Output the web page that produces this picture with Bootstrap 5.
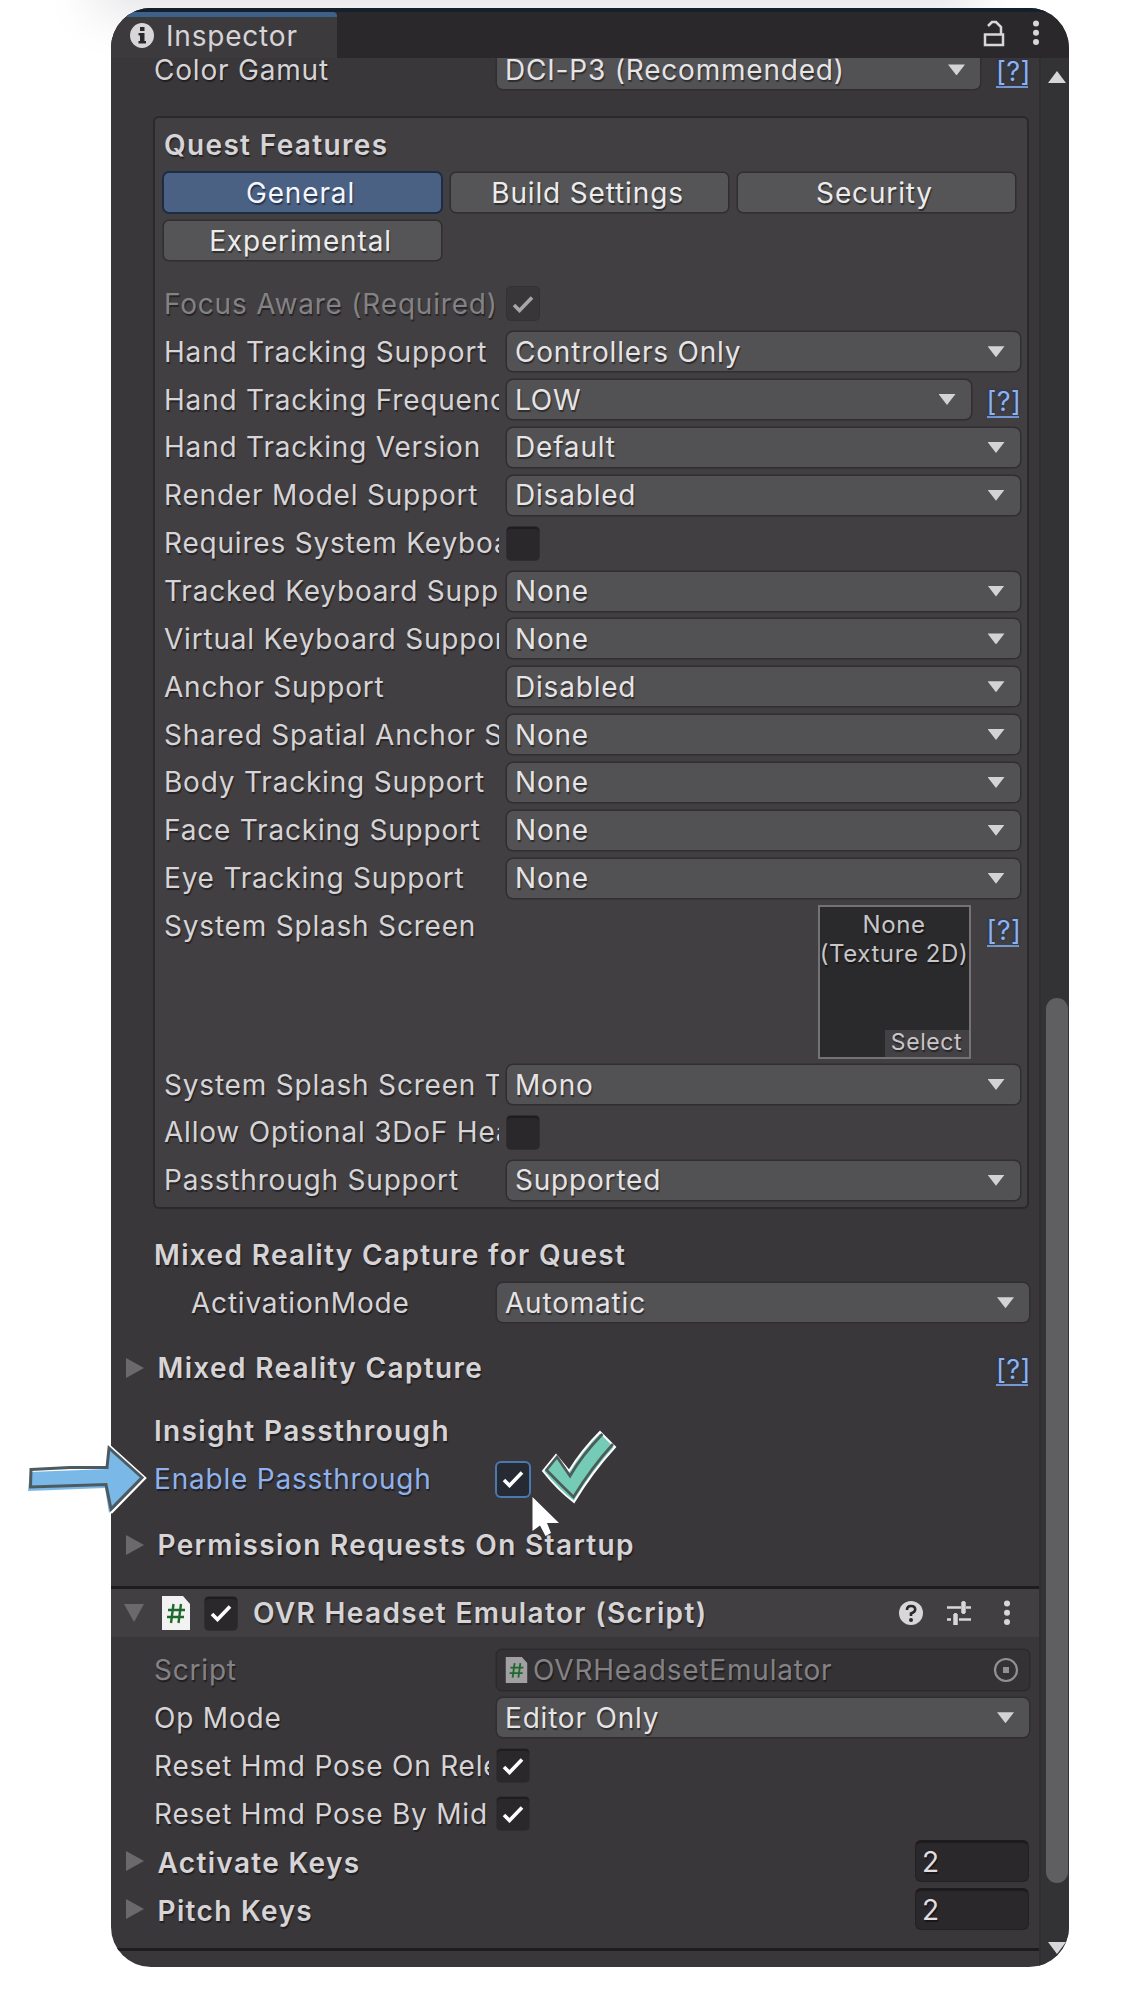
<!DOCTYPE html>
<html lang="en">
<head>
<meta charset="utf-8">
<title>Inspector</title>
<link rel="stylesheet" href="https://cdn.jsdelivr.net/npm/bootstrap@5.3.0/dist/css/bootstrap.min.css">
<style>
body{margin:0;background:#fff;width:1130px;height:1995px;overflow:hidden;position:relative;font-family:Inter,"Liberation Sans",sans-serif;font-size:28px;line-height:36px;letter-spacing:.8px;color:#d6d4d6}
.top-shade{position:absolute;left:0;top:0;width:1130px;height:60px;overflow:hidden}
.top-shade::before{content:"";position:absolute;left:110px;top:-60px;width:850px;height:60px;box-shadow:0 0 50px 16px #e6e6e9}
.inspector{position:relative;margin:8px 0 0 111px;width:957.5px;height:1959px;border-radius:40px;overflow:hidden;background:#39373a}
.tabbar{height:50px;background:#2a282b;flex:none}
.tab-active{width:226px;background:#3c3a3d;border-top:5px solid #3d6189;margin-top:4px;border-radius:0 4px 0 0;padding:0 0 4px 19px;gap:12px}
.tab-strip{background:linear-gradient(#14202b 0 4px,transparent 4px),#2a282b}
.pane{width:928px;overflow:hidden;text-shadow:1px 2px 1px rgba(0,0,0,.45)}
.rail{width:29.5px;background:#333234;border-left:2px solid #302e31;position:relative}
.thumb{margin:0 auto 0 4.5px;width:22px;height:885px;border-radius:11px;background:#5f5e60}
.line{height:47.86px;flex:none;display:flex;align-items:center}
.outer{padding:0 10px 0 43px}
.inner{padding:0 7.5px 0 9px}
.lbl{width:335px;flex:none;white-space:nowrap;overflow:hidden;margin-right:8px}
.strong{font-weight:600;letter-spacing:1.35px;white-space:nowrap}
.drop{flex:1;height:39px;background:#525153;border-radius:6px;box-shadow:0 0 0 1.5px #302e31;padding:0 15px 0 8px;display:flex;align-items:center;justify-content:space-between;color:#e6e4e6;white-space:nowrap}
.drop::after{content:"";width:17px;height:11px;background:#d4d2d4;clip-path:polygon(0 0,100% 0,50% 100%)}
.tick{width:32px;height:33px;border-radius:4px;background:#2a282b;box-shadow:inset 0 2px 0 #1f1d20,0 0 0 1px #302e31;display:flex;align-items:center;justify-content:center;flex:none}
.tick.off{background:#383639;box-shadow:0 0 0 1px #333134}
.tick.hot{box-shadow:0 0 0 2px #4a78b0;background:#262a33}
.dim{color:#848285}
.help{color:#8fb2ee;font-size:27px;letter-spacing:.4px;line-height:28px;border-bottom:2px solid #7798d2;margin:7px 1px 0 16px;width:32px;flex:none;text-align:center;white-space:nowrap;text-shadow:0 0 3px #16305e}
.group{margin:22px 10px 0 42px;height:1093px;border:2px solid #2b292c;border-radius:6px;background:#413f42;padding-top:3px;flex:none}
.tool{width:277px;height:39px;padding:0 4px 0 0;border:0;border-radius:5px;background:#555456;box-shadow:0 0 0 1.5px #302e31;color:#ececec;font-size:28px;line-height:36px;letter-spacing:.85px;text-shadow:inherit}
.tool.on{background:#4a6184;box-shadow:0 0 0 2px #1d2c45;color:#f2f6ff}
.tools{gap:10px;padding-left:9px}
.splash{height:158.5px;flex:none;display:flex;align-items:flex-start;justify-content:space-between}
.thumbnail-slot{width:153px;height:153.5px;margin-top:3px;border:2px solid #737274;background:#2a292b;font-size:24px;line-height:28.5px;letter-spacing:.6px;text-align:center;white-space:nowrap;display:flex;flex-direction:column;justify-content:space-between;color:#c8c6c8;padding-top:4px}
.select-btn{align-self:flex-end;width:84px;height:27px;line-height:24px;font-size:23px;background:#434144}
.fold{width:0;height:0;border-left:18px solid #6b696c;border-top:10.5px solid transparent;border-bottom:10.5px solid transparent;margin-left:15px;margin-right:13.5px;flex:none}
.fold.open{border-top:18px solid #6b696c;border-left:10px solid transparent;border-right:10px solid transparent;border-bottom:0;margin-right:17px;margin-left:13px}
.comp{height:51px;border-top:3px solid #1e1c1f;background:#413f42;flex:none}
.slot{flex:1;height:40px;border-radius:5px;background:#343235;box-shadow:0 0 0 1.5px #2c2a2d;padding:0 10px 0 8px;display:flex;align-items:center;color:#848285}
.num{width:114px;height:42px;border-radius:6px;background:#2a282b;border:1px solid #232124;border-top:3px solid #1d1b1e;padding-left:6px;display:flex;align-items:center;color:#e0dee0}
.over{position:absolute;left:0;top:0;pointer-events:none}
</style>
<script src="https://cdn.jsdelivr.net/npm/bootstrap@5.3.0/dist/js/bootstrap.bundle.min.js"></script>
</head>
<body>
<svg width="0" height="0" class="position-absolute">
  <symbol id="tk" viewBox="0 0 22 18"><path d="M2 10 L7.500 15.500 L20 2.500" fill="none" stroke="currentColor" stroke-width="3.600"/></symbol>
  <symbol id="cs" viewBox="0 0 30 34"><path d="M1 0H22L29 8V34H1Z" fill="currentColor"/><path d="M12.500 8 10 27M20 8 17.500 27M7 14H24M6 21H23" stroke="#1d6a2c" stroke-width="2.400" fill="none"/></symbol>
  <symbol id="dots" viewBox="0 0 8 26"><g fill="#d8d6d8"><circle cx="4" cy="3.500" r="3"/><circle cx="4" cy="12.700" r="3"/><circle cx="4" cy="22" r="3"/></g></symbol>
</svg>
<div class="top-shade"></div>

<main class="inspector d-flex flex-column">
  <header class="tabbar tab-strip d-flex justify-content-between">
    <div class="tab-active d-flex align-items-center">
      <svg width="24" height="25" viewBox="0 0 24 25"><ellipse cx="12" cy="12.500" rx="12" ry="12.500" fill="#d8d6d8"/><path d="M10 4H14.500V8H10ZM8.500 10H14.500V18H16V20.500H8.500V18H10V12.500H8.500Z" fill="#2a282b"/></svg>
      <span>Inspector</span>
    </div>
    <div class="d-flex align-items-center" style="gap:27px;padding-right:29px">
      <svg width="22" height="27" viewBox="0 0 22 27" fill="none" stroke="#d8d6d8" stroke-width="2.500"><path d="M2 14.500H20V25H2ZM18 14V7L13 2H9L5 6"/></svg>
      <svg width="8" height="26"><use href="#dots"/></svg>
    </div>
  </header>

  <div class="d-flex flex-grow-1" style="min-height:0">
    <div class="pane d-flex flex-column">
      <div class="line outer" style="margin-top:-12px"><div class="lbl">Color Gamut</div><div class="drop">DCI-P3 (Recommended)</div><a class="help text-decoration-none">[?]</a></div>

      <section class="group d-flex flex-column">
        <div class="line inner strong">Quest Features</div>
        <div class="line tools"><button class="btn tool on">General</button><button class="btn tool">Build Settings</button><button class="btn tool">Security</button></div>
        <div class="line tools" style="margin-bottom:15.500px"><button class="btn tool">Experimental</button></div>
        <div class="line inner dim"><div class="lbl">Focus Aware (Required)</div><span class="tick off" style="color:#a8a6a8"><svg width="22" height="18"><use href="#tk"/></svg></span></div>
        <div class="line inner"><div class="lbl">Hand Tracking Support</div><div class="drop">Controllers Only</div></div>
        <div class="line inner"><div class="lbl">Hand Tracking Frequency</div><div class="drop">LOW</div><a class="help text-decoration-none">[?]</a></div>
        <div class="line inner"><div class="lbl">Hand Tracking Version</div><div class="drop">Default</div></div>
        <div class="line inner"><div class="lbl">Render Model Support</div><div class="drop">Disabled</div></div>
        <div class="line inner"><div class="lbl">Requires System Keyboard</div><span class="tick"></span></div>
        <div class="line inner"><div class="lbl">Tracked Keyboard Support</div><div class="drop">None</div></div>
        <div class="line inner"><div class="lbl">Virtual Keyboard Support</div><div class="drop">None</div></div>
        <div class="line inner"><div class="lbl">Anchor Support</div><div class="drop">Disabled</div></div>
        <div class="line inner"><div class="lbl">Shared Spatial Anchor Support</div><div class="drop">None</div></div>
        <div class="line inner"><div class="lbl">Body Tracking Support</div><div class="drop">None</div></div>
        <div class="line inner"><div class="lbl">Face Tracking Support</div><div class="drop">None</div></div>
        <div class="line inner"><div class="lbl">Eye Tracking Support</div><div class="drop">None</div></div>
        <div class="splash inner">
          <div class="lbl" style="margin-top:6px">System Splash Screen</div>
          <div class="d-flex align-items-start">
            <div class="thumbnail-slot"><div>None<br>(Texture 2D)</div><div class="select-btn">Select</div></div>
            <a class="help text-decoration-none" style="margin-top:15px">[?]</a>
          </div>
        </div>
        <div class="line inner"><div class="lbl">System Splash Screen Type</div><div class="drop">Mono</div></div>
        <div class="line inner"><div class="lbl">Allow Optional 3DoF Head Tracking</div><span class="tick"></span></div>
        <div class="line inner"><div class="lbl">Passthrough Support</div><div class="drop">Supported</div></div>
      </section>

      <div class="line outer strong" style="margin-top:22px">Mixed Reality Capture for Quest</div>
      <div class="line outer"><div class="lbl" style="padding-left:37px">ActivationMode</div><div class="drop">Automatic</div></div>
      <div class="line" style="margin-top:17px;padding-right:10px"><i class="fold"></i><span class="strong flex-grow-1">Mixed Reality Capture</span><a class="help text-decoration-none">[?]</a></div>
      <div class="line outer strong" style="margin-top:16px">Insight Passthrough</div>
      <div class="line outer"><div class="lbl" style="color:#8fb2ee">Enable Passthrough</div><span class="tick hot text-white"><svg width="22" height="18"><use href="#tk"/></svg></span></div>
      <div class="line" style="margin-top:18px"><i class="fold"></i><span class="strong">Permission Requests On Startup</span></div>

      <div class="comp d-flex align-items-center" style="margin-top:17px;padding-right:28px">
        <i class="fold open"></i>
        <svg width="30" height="34" style="color:#f2f2f2"><use href="#cs"/></svg>
        <span class="tick text-white" style="margin:0 16px 0 14px"><svg width="22" height="18"><use href="#tk"/></svg></span>
        <span class="strong flex-grow-1">OVR Headset Emulator (Script)</span>
        <svg width="24" height="24" viewBox="0 0 24 24"><circle cx="12" cy="12" r="12" fill="#d8d6d8"/><path d="M8 9Q8 5 12 5Q16.200 5 16.200 8.500Q16.200 11 12 12.500V15" fill="none" stroke="#2a282b" stroke-width="2.600"/><circle cx="12" cy="19" r="2" fill="#2a282b"/></svg>
        <svg width="24" height="24" viewBox="0 0 24 24" style="margin:0 32px 0 24px"><path d="M0 6.500H14M19 6.500H24M16.500 0V13M0 18.500H4M12 18.500H24M8.500 12V24" stroke="#d8d6d8" stroke-width="2.600" fill="none"/><path d="M16.500 1V12M8.500 13V24" stroke="#d8d6d8" stroke-width="4.500"/></svg>
        <svg width="8" height="26"><use href="#dots"/></svg>
      </div>
      <div class="line outer dim" style="margin-top:9px"><div class="lbl">Script</div><div class="slot"><svg width="23" height="28" style="color:#a2a0a2;margin-right:5px"><use href="#cs"/></svg><span class="flex-grow-1">OVRHeadsetEmulator</span><svg width="26" height="26" viewBox="0 0 26 26"><circle cx="13" cy="13" r="11" fill="none" stroke="#929092" stroke-width="2.200"/><rect x="10" y="10" width="6" height="6" fill="#929092"/></svg></div></div>
      <div class="line outer"><div class="lbl">Op Mode</div><div class="drop">Editor Only</div></div>
      <div class="line outer"><div class="lbl">Reset Hmd Pose On Release</div><span class="tick text-white"><svg width="22" height="18"><use href="#tk"/></svg></span></div>
      <div class="line outer"><div class="lbl">Reset Hmd Pose By Middle Mouse</div><span class="tick text-white"><svg width="22" height="18"><use href="#tk"/></svg></span></div>
      <div class="line" style="padding-right:10px"><i class="fold"></i><span class="strong flex-grow-1 pt-1">Activate Keys</span><div class="num">2</div></div>
      <div class="line" style="padding-right:10px"><i class="fold"></i><span class="strong flex-grow-1 pt-1">Pitch Keys</span><div class="num">2</div></div>
      <div style="margin-top:15px;height:3px;background:#1e1c1f;flex:none"></div>
    </div>
    <div class="rail d-flex flex-column">
      <svg width="18" height="12" style="margin:13px 0 0 7px;flex:none"><path d="M9 0 18 12H0Z" fill="#d8d6d8"/></svg>
      <div class="thumb flex-shrink-0" style="margin-top:915px"></div>
      <svg width="18" height="12" style="margin:59px 0 0 7px;flex:none"><path d="M0 0H18L9 12Z" fill="#d8d6d8"/></svg>
    </div>
  </div>
</main>

<svg class="over" width="1130" height="1995" viewBox="0 0 1130 1995">
  <path d="M30 1472 107 1469 109 1449 143 1478 109 1513 105 1488 28 1491Z" fill="#7ab8e8"/>
  <path d="M110 1446.500 145 1478 111 1513" fill="none" stroke="#fff" stroke-width="2.500"/>
  <path d="M31 1469.500 70 1467.500 107 1467.500 109 1448 142 1477.500 111 1509 106 1484.500 30.500 1487Z" fill="none" stroke="#4d5a60" stroke-width="3"/>
  <path d="M600 1432 615 1447Q592 1472 574 1502Q558 1490 543 1471L556 1455 569 1471Q582 1450 600 1432Z" fill="#74cbb6" stroke="#fff" stroke-width="2"/>
  <path d="M602.500 1434Q582 1455 570 1476L557 1457 546.500 1470Q560 1484 573.500 1497Q592 1467 613 1444" fill="none" stroke="#4d5a5a" stroke-width="2.600"/>
  <path d="M532.500 1497V1531L540 1525.500 545.500 1536 551 1533 547 1523H559Z" fill="#fff"/>
</svg>
</body>
</html>
